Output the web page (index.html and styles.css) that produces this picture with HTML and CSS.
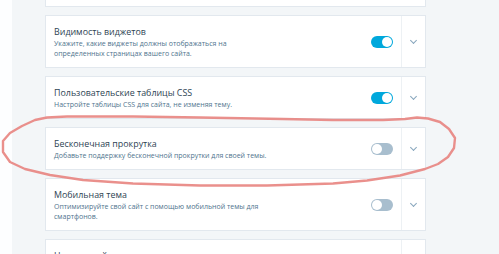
FILE: index.html
```html
<!DOCTYPE html>
<html>
  <head>
    <title>Настройки</title>
    <link rel="stylesheet" href="styles.css">
  </head>
  <body>
    <div class="layout">
      <div class="sidebar"></div>
      <main class="content">
        <div class="card card-cut"></div>

        <div class="card">
          <div class="card-main">
            <div class="card-text">
              <h3 class="card-title">Видимость виджетов</h3>
              <p class="card-desc">Укажите, какие виджеты должны отображаться на определенных страницах вашего сайта.</p>
            </div>
            <span class="toggle on"></span>
          </div>
          <div class="card-action"><span class="chevron"></span></div>
        </div>

        <div class="card">
          <div class="card-main">
            <div class="card-text">
              <h3 class="card-title">Пользовательские таблицы CSS</h3>
              <p class="card-desc">Настройте таблицы CSS для сайта, не изменяя тему.</p>
            </div>
            <span class="toggle on"></span>
          </div>
          <div class="card-action"><span class="chevron"></span></div>
        </div>

        <div class="card">
          <div class="card-main">
            <div class="card-text">
              <h3 class="card-title">Бесконечная прокрутка</h3>
              <p class="card-desc">Добавьте поддержку бесконечной прокрутки для своей темы.</p>
            </div>
            <span class="toggle"></span>
          </div>
          <div class="card-action"><span class="chevron"></span></div>
        </div>

        <div class="card">
          <div class="card-main">
            <div class="card-text">
              <h3 class="card-title">Мобильная тема</h3>
              <p class="card-desc">Оптимизируйте свой сайт с помощью мобильной темы для смартфонов.</p>
            </div>
            <span class="toggle"></span>
          </div>
          <div class="card-action"><span class="chevron"></span></div>
        </div>

        <div class="card">
          <div class="card-main">
            <div class="card-text">
              <h3 class="card-title">Новогодний снег</h3>
              <p class="card-desc">Пусть на вашем сайте идёт снег с декабря по январь.</p>
            </div>
            <span class="toggle"></span>
          </div>
          <div class="card-action"><span class="chevron"></span></div>
        </div>
      </main>
    </div>

    <!-- hand-drawn highlight around the infinite scroll row -->
    <svg class="scribble" width="499" height="254" viewBox="0 0 499 254">
      <path d="M47 117.5 L67 116.5 L133 116.5 L200 117.5 L283 119 L333 120 L383 120 L405 119 L417 117.5 L428 118.5 L440 122 L449 129 L455 138 L454 148 L448 157 L438 164 L425 169 L400 175.5 L367 180.5 L333 183.5 L267 185.5 L200 185.5 L133 183.5 L83 180 L50 175 L25 169 L10 162 L3 152 L3 141 L10 133 L22 126 L35 120 L47 117.5" />
    </svg>
  </body>
</html>
```

FILE: styles.css
```css
* {
  box-sizing: border-box;
}

body {
  margin: 0;
  height: 100vh;
  overflow: hidden;
  background-color: #f3f6f8;
  font-family: "Open Sans", "Noto Sans", sans-serif;
  position: relative;
}

.layout {
  display: flex;
  height: 100%;
}

.sidebar {
  width: 12px;
  background-color: #fdfeff;
}

.content {
  padding-left: 33px;
  display: flex;
  flex-direction: column;
  gap: 8px;
}

.card {
  width: 381px;
  flex-shrink: 0;
  background-color: #fff;
  border: 1px solid #e2e8ee;
  display: flex;
}

.card-cut {
  height: 7px;
  border-top: 0;
}

.card-main {
  flex: 1;
  display: flex;
  align-items: center;
  padding: 9px 8px 8px 8px;
}

.card-text {
  flex: 1;
}

.card-title {
  margin: 0;
  font-size: 8.9px;
  line-height: 14px;
  font-weight: 400;
  color: #2e4453;
}

.card-desc {
  margin: 0;
  max-width: 216px;
  font-size: 7px;
  line-height: 10px;
  color: #4f748e;
}

.toggle {
  width: 22px;
  height: 12px;
  border-radius: 6px;
  background-color: #a8bece;
  position: relative;
  flex-shrink: 0;
}

.toggle::after {
  content: "";
  position: absolute;
  top: 1px;
  left: 1px;
  width: 10px;
  height: 10px;
  border-radius: 50%;
  background-color: #fff;
}

.toggle.on {
  background-color: #00a8dc;
}

.toggle.on::after {
  left: 11px;
}

.card-action {
  width: 24px;
  border-left: 1px solid #edf1f4;
  display: flex;
  align-items: center;
  justify-content: center;
}

.chevron {
  width: 5px;
  height: 5px;
  border-right: 1px solid #87a6bc;
  border-bottom: 1px solid #87a6bc;
  transform: rotate(45deg);
  margin-top: -3px;
}

.scribble {
  position: absolute;
  top: 0;
  left: 0;
  pointer-events: none;
}

.scribble path {
  fill: none;
  stroke: #e8847f;
  stroke-width: 2.4;
  stroke-linejoin: round;
  stroke-linecap: round;
  stroke-opacity: 0.9;
}
```
